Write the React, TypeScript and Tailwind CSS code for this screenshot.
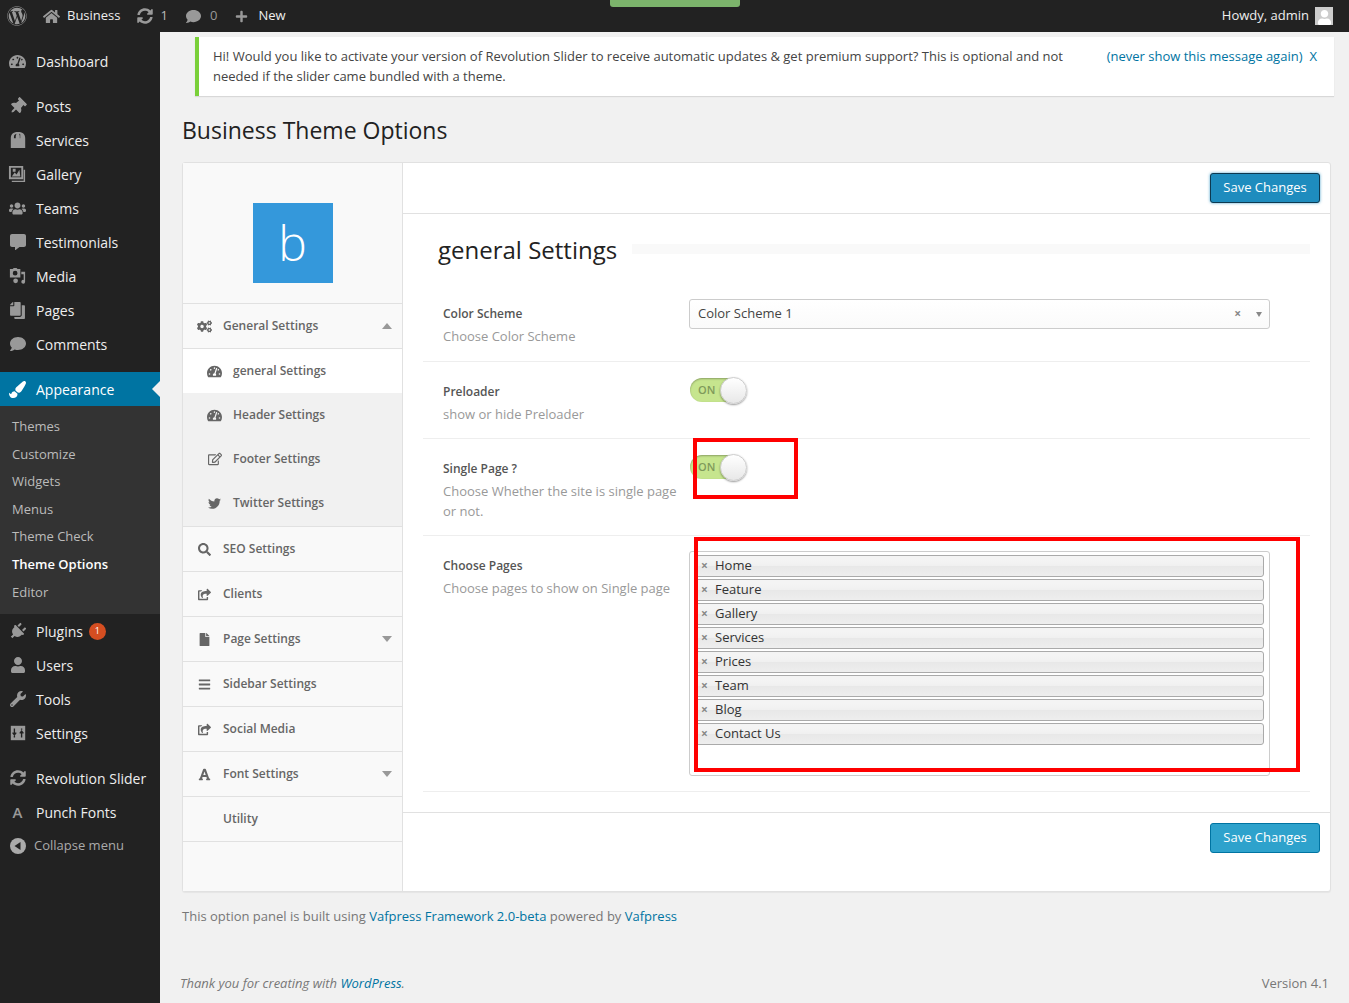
import type { ReactNode } from 'react'
import {
  FaBars,
  FaCogs,
  FaComment,
  FaCommentAlt,
  FaCopy,
  FaFile,
  FaFont,
  FaHome,
  FaPaintBrush,
  FaPlug,
  FaPlus,
  FaRegEdit,
  FaSearch,
  FaShareSquare,
  FaSyncAlt,
  FaTachometerAlt,
  FaThumbtack,
  FaTwitter,
  FaUser,
  FaUsers,
  FaWordpress,
  FaWrench,
} from 'react-icons/fa'

const font = "font-['Open_Sans',_sans-serif]"

function BagIcon() {
  return (
    <svg viewBox="0 0 20 20" className="h-[18px] w-[18px] fill-current">
      <path d="M2 8c0-4 2-7 8-7s8 3 8 7v11H2V8zm3.5 0h2V6c0-1 .3-2 1-3-2 .5-3 1.500-3 3v2zm5 0h2V3.500C11.800 3.200 11 3 11 3c.8 1 1 2 1 3v2h-1.500z" />
    </svg>
  )
}

function GalleryIcon() {
  return (
    <svg viewBox="0 0 20 20" className="h-[19px] w-[19px] fill-current">
      <path d="M1 1h15v14H1V1zm2 2v10h11V3H3zm15 2v13H4v-1.500h12.500V5H18z" />
      <path d="M4 12l3-4 2 2 3-5 1 7H4zM5 4h3v3H5z" />
    </svg>
  )
}

function MediaIcon() {
  return (
    <svg viewBox="0 0 20 20" className="h-[19px] w-[19px] fill-current">
      <path d="M2 2h3l1-1h3l1 1h3v9H2V2zm5.500 2a2.500 2.500 0 100 5 2.500 2.500 0 000-5z" />
      <path d="M14 5h4v10.500a2 2 0 11-1.500-1.900V7.500h-2.500V5zM8 12a2.500 2.500 0 110 5 2.500 2.500 0 010-5z" />
    </svg>
  )
}

function SettingsIcon() {
  return (
    <svg viewBox="0 0 20 20" className="h-[18px] w-[18px]">
      <path d="M2 2h16v16H2z" fill="currentColor" />
      <path d="M6 5v6M4 9.500l2 2.500 2-2.500M6 13v2M14 15V9M12 10.500L14 8l2 2.500M14 5v1.500" stroke="#222" strokeWidth="1.500" fill="none" />
    </svg>
  )
}

function CollapseIcon() {
  return (
    <svg viewBox="0 0 16 16" className="h-4 w-4">
      <circle cx="8" cy="8" r="8" fill="currentColor" />
      <path d="M10.500 4v8L4.500 8z" fill="#222" />
    </svg>
  )
}

function GaugeIcon() {
  return <FaTachometerAlt className="h-[15px] w-[15px]" />
}

type MenuEntry = { label: string; icon: ReactNode; badge?: string }

const topMenu: MenuEntry[] = [{ label: 'Dashboard', icon: <FaTachometerAlt className="h-[17px] w-[17px]" /> }]

const contentMenu: MenuEntry[] = [
  { label: 'Posts', icon: <FaThumbtack className="h-[17px] w-[17px] rotate-45" /> },
  { label: 'Services', icon: <BagIcon /> },
  { label: 'Gallery', icon: <GalleryIcon /> },
  { label: 'Teams', icon: <FaUsers className="h-[17px] w-[17px]" /> },
  { label: 'Testimonials', icon: <FaCommentAlt className="h-4 w-4" /> },
  { label: 'Media', icon: <MediaIcon /> },
  { label: 'Pages', icon: <FaCopy className="h-[17px] w-[17px] -scale-x-100" /> },
  { label: 'Comments', icon: <FaComment className="h-4 w-4" /> },
]

const adminMenu: MenuEntry[] = [
  { label: 'Plugins', icon: <FaPlug className="h-[17px] w-[17px] rotate-45" />, badge: '1' },
  { label: 'Users', icon: <FaUser className="h-4 w-4" /> },
  { label: 'Tools', icon: <FaWrench className="h-4 w-4" /> },
  { label: 'Settings', icon: <SettingsIcon /> },
]

const pluginMenu: MenuEntry[] = [
  { label: 'Revolution Slider', icon: <FaSyncAlt className="h-4 w-4" /> },
  { label: 'Punch Fonts', icon: <span className="text-[15px] font-semibold leading-none">A</span> },
]

const subMenu = ['Themes', 'Customize', 'Widgets', 'Menus', 'Theme Check', 'Theme Options', 'Editor']

const pages = ['Home', 'Feature', 'Gallery', 'Services', 'Prices', 'Team', 'Blog', 'Contact Us']

function MenuItem({ item }: { item: MenuEntry }) {
  return (
    <div className="flex h-[34px] items-center text-[14px] text-[#eee]">
      <span className="flex w-9 shrink-0 justify-center pr-[1px] text-[#999]">{item.icon}</span>
      <span>{item.label}</span>
      {item.badge ? (
        <span className="ml-[6px] flex h-[17px] w-[17px] items-center justify-center rounded-full bg-[#d54e21] text-[9px] text-white">
          {item.badge}
        </span>
      ) : null}
    </div>
  )
}

function AdminBar() {
  return (
    <header className="flex h-8 items-center bg-[#222] text-[13px] text-[#eee]">
      <FaWordpress className="ml-[7px] h-[20px] w-[20px] text-[#999]" />
      <FaHome className="ml-4 h-[17px] w-[17px] text-[#999]" />
      <span className="ml-[7px]">Business</span>
      <FaSyncAlt className="ml-4 h-4 w-4 text-[#999]" />
      <span className="ml-2 text-[#bbb]">1</span>
      <FaComment className="ml-[18px] h-[15px] w-[15px] text-[#999]" />
      <span className="ml-[9px] text-[#999]">0</span>
      <FaPlus className="ml-[18px] h-[13px] w-[13px] text-[#999]" />
      <span className="ml-[10px]">New</span>
      <span className="ml-auto">Howdy, admin</span>
      <span className="ml-[6px] mr-[16px] flex h-[18px] w-[18px] items-end justify-center overflow-hidden bg-[#ccc]">
        <FaUser className="h-[15px] w-[15px] text-white" />
      </span>
    </header>
  )
}

function Sidebar() {
  return (
    <aside className="w-40 shrink-0 bg-[#222] pt-3">
      {topMenu.map((item) => (
        <MenuItem key={item.label} item={item} />
      ))}
      <div className="h-[11px]" />
      {contentMenu.map((item) => (
        <MenuItem key={item.label} item={item} />
      ))}
      <div className="h-[11px]" />
      <div className="relative flex h-[34px] items-center bg-[#0074a2] text-[14px] text-white">
        <span className="flex w-9 shrink-0 justify-center pr-[1px]">
          <FaPaintBrush className="h-[17px] w-[17px]" />
        </span>
        <span>Appearance</span>
        <span className="absolute right-0 top-[9px] h-0 w-0 border-y-[8px] border-r-[8px] border-y-transparent border-r-[#f1f1f1]" />
      </div>
      <div className="flex h-[208px] flex-col bg-[#333] pt-[7px] text-[13px] text-[#bbb]">
        {subMenu.map((label) => (
          <div
            key={label}
            className={`flex h-[27.6px] items-center pl-3 ${label === 'Theme Options' ? 'font-semibold text-white' : ''}`}
          >
            {label}
          </div>
        ))}
      </div>
      {adminMenu.map((item) => (
        <MenuItem key={item.label} item={item} />
      ))}
      <div className="h-[11px]" />
      {pluginMenu.map((item) => (
        <MenuItem key={item.label} item={item} />
      ))}
      <div className="flex h-[34px] items-center text-[13px] text-[#aaa]">
        <span className="ml-[10px] mr-2 text-[#aaa]">
          <CollapseIcon />
        </span>
        Collapse menu
      </div>
    </aside>
  )
}

type NavEntry = { label: string; icon?: ReactNode; caret?: 'up' | 'down' }

const navAfter: NavEntry[] = [
  { label: 'SEO Settings', icon: <FaSearch className="h-[13px] w-[13px]" /> },
  { label: 'Clients', icon: <FaShareSquare className="h-[13px] w-[13px]" /> },
  { label: 'Page Settings', icon: <FaFile className="h-[13px] w-[13px]" />, caret: 'down' },
  { label: 'Sidebar Settings', icon: <FaBars className="h-[13px] w-[13px]" /> },
  { label: 'Social Media', icon: <FaShareSquare className="h-[13px] w-[13px]" /> },
  { label: 'Font Settings', icon: <FaFont className="h-[13px] w-[13px]" />, caret: 'down' },
  { label: 'Utility' },
]

const navSub: NavEntry[] = [
  { label: 'Header Settings', icon: <GaugeIcon /> },
  { label: 'Footer Settings', icon: <FaRegEdit className="h-[14px] w-[14px]" /> },
  { label: 'Twitter Settings', icon: <FaTwitter className="h-[13px] w-[13px]" /> },
]

function NavRow({ item }: { item: NavEntry }) {
  return (
    <div className="flex h-[45px] items-center border-b border-[#e1e1e1] bg-[#f9f9f9] text-[12px] font-semibold text-[#666]">
      <span className="flex w-10 shrink-0 justify-center pl-[3px] text-[#666]">{item.icon}</span>
      <span>{item.label}</span>
      {item.caret === 'up' ? (
        <span className="ml-auto mr-[10px] h-0 w-0 border-x-[5px] border-b-[6px] border-x-transparent border-b-[#999]" />
      ) : null}
      {item.caret === 'down' ? (
        <span className="ml-auto mr-[10px] h-0 w-0 border-x-[5px] border-t-[6px] border-x-transparent border-t-[#999]" />
      ) : null}
    </div>
  )
}

function NavSubRow({ item, active }: { item: NavEntry; active?: boolean }) {
  return (
    <div className={`flex h-11 items-center text-[12px] font-semibold text-[#666] ${active ? 'bg-white' : ''}`}>
      <span className="flex w-[50px] shrink-0 justify-center pl-[13px]">{item.icon}</span>
      <span>{item.label}</span>
    </div>
  )
}

function OptionNav() {
  return (
    <nav className="w-[220px] shrink-0 border-r border-[#e1e1e1] bg-[#f9f9f9]">
      <div className="flex h-[141px] justify-center border-b border-[#e1e1e1] pt-10">
        <div className="flex h-20 w-20 items-center justify-center bg-[#3498db] text-[48px] font-light leading-none text-white">
          b
        </div>
      </div>
      <NavRow item={{ label: 'General Settings', icon: <FaCogs className="h-[15px] w-[15px]" />, caret: 'up' }} />
      <div className="border-b border-[#e1e1e1] bg-[#f1f1f1] pb-[1px]">
        <NavSubRow item={{ label: 'general Settings', icon: <GaugeIcon /> }} active />
        {navSub.map((item) => (
          <NavSubRow key={item.label} item={item} />
        ))}
      </div>
      {navAfter.map((item) => (
        <NavRow key={item.label} item={item} />
      ))}
    </nav>
  )
}

function SaveButton({ focused }: { focused?: boolean }) {
  return (
    <button
      type="button"
      className={`h-[30px] w-[110px] rounded-[3px] border text-[13px] text-white ${
        focused
          ? 'border-[#0e3950] bg-[#1e8cbe] shadow-[0_0_3px_rgba(30,140,190,0.8)]'
          : 'border-[#0074a2] bg-[#2ea2cc]'
      }`}
    >
      Save Changes
    </button>
  )
}

function Toggle() {
  return (
    <div className="relative h-[25px] w-[59px]">
      <div className="ml-[1px] mt-[1px] flex h-[24px] w-[50px] items-center rounded-full bg-[#c6e58e] pl-[8px] text-[11px] font-semibold text-[#7f9a5a] shadow-[inset_0_1px_2px_rgba(0,0,0,0.3)]">
        ON
      </div>
      <div className="absolute left-[31px] top-0 h-[27px] w-[27px] rounded-full border border-[#ccc] bg-gradient-to-b from-white to-[#e8e8e8] shadow-[0_1px_2px_rgba(0,0,0,0.4)]" />
    </div>
  )
}

function FieldText({ title, children }: { title: string; children: ReactNode }) {
  return (
    <div className="w-[266px] shrink-0 pl-5">
      <div className="text-[12px] font-semibold leading-[20px] text-[#555]">{title}</div>
      <div className="mt-[2px] text-[13px] leading-[20px] text-[#999]">{children}</div>
    </div>
  )
}

function Annotation({ className }: { className: string }) {
  return <div className={`pointer-events-none absolute border-4 border-[#ff0000] ${className}`} />
}

function OptionBody() {
  return (
    <div className="flex min-w-0 flex-1 flex-col">
      <div className="flex h-[51px] items-center justify-end border-b border-[#e1e1e1] pr-[10px]">
        <SaveButton focused />
      </div>
      <div className="px-5 pt-[20px]">
        <div className="flex h-[32px] items-center pl-[15px]">
          <h2 className="text-[24px] leading-[32px] text-[#222]">general Settings</h2>
          <div className="ml-[15px] h-[10px] flex-1 -translate-y-[1px] bg-[#f9f9f9]" />
        </div>

        <div className="mt-[18px] flex h-[78px] border-b border-[#eee] pt-[15px]">
          <div className="pt-[5px]">
            <FieldText title="Color Scheme">Choose Color Scheme</FieldText>
          </div>
          <div className="flex h-[30px] w-[581px] items-center rounded-[3px] border border-[#ccc] bg-gradient-to-b from-white to-[#fafafa] pl-2 text-[13px] text-[#444]">
            Color Scheme 1
            <span className="ml-auto text-[12px] font-bold leading-none text-[#888]">×</span>
            <span className="ml-[15px] mr-[7px] h-0 w-0 border-x-[3.500px] border-t-[5px] border-x-transparent border-t-[#888]" />
          </div>
        </div>

        <div className="flex h-[77px] border-b border-[#eee] pt-[15px]">
          <div className="pt-[5px]">
            <FieldText title="Preloader">show or hide Preloader</FieldText>
          </div>
          <Toggle />
        </div>

        <div className="relative flex h-[97px] border-b border-[#eee] pt-[15px]">
          <div className="pt-[5px]">
            <FieldText title="Single Page ?">Choose Whether the site is single page or not.</FieldText>
          </div>
          <Toggle />
          <Annotation className="left-[270px] top-[-1px] h-[61px] w-[105px]" />
        </div>

        <div className="relative flex h-[256px] border-b border-[#eee] pt-[15px]">
          <div className="pt-[5px]">
            <FieldText title="Choose Pages">Choose pages to show on Single page</FieldText>
          </div>
          <div className="flex h-[225px] w-[581px] flex-col gap-[2px] rounded-[3px] border border-[#ccc] px-[5px] pt-[3px]">
            {pages.map((page) => (
              <div
                key={page}
                className="flex h-[22px] shrink-0 items-center rounded-[3px] border border-[#aaa] bg-[linear-gradient(to_bottom,#f4f4f4_20%,#f0f0f0_50%,#e8e8e8_52%,#eee_100%)] pl-[4px] text-[13px] text-[#333]"
              >
                <span className="mr-[6px] w-[9px] text-center text-[12px] font-bold leading-none text-[#888]">×</span>
                {page}
              </div>
            ))}
          </div>
          <Annotation className="left-[271px] top-[1px] h-[235px] w-[606px]" />
        </div>
      </div>
      <div className="mt-5 flex h-[79px] justify-end border-t border-[#e1e1e1] pr-[10px] pt-[10px]">
        <SaveButton />
      </div>
    </div>
  )
}

export default function App() {
  return (
    <div className={`relative flex h-[1003px] w-[1349px] flex-col overflow-hidden bg-[#f1f1f1] ${font}`}>
      <AdminBar />
      <div className="absolute left-[610px] top-0 h-[7px] w-[130px] rounded-b-[3px] bg-[#7cb46c]" />
      <div className="flex flex-1">
        <Sidebar />
        <main className="relative min-w-0 flex-1 pl-[22px] pr-[18px] pt-[5px]">
          <div className="-mr-[3px] ml-[13px] flex h-[59px] border-l-4 border-[#7ad03a] bg-white pl-[14px] pr-[17px] pt-[9px] text-[13px] leading-[20px] text-[#444] shadow-[0_1px_1px_rgba(0,0,0,0.1)]">
            <p className="w-[880px]">
              Hi! Would you like to activate your version of Revolution Slider to receive automatic updates &amp; get
              premium support? This is optional and not needed if the slider came bundled with a theme.
            </p>
            <span className="ml-auto text-[#0074a2]">(never show this message again)</span>
            <span className="ml-[7px] text-[#0074a2]">X</span>
          </div>
          <h1 className="mt-[17px] h-[49px] text-[23px] leading-[34px] text-[#222]">Business Theme Options</h1>
          <div className="flex h-[730px] rounded-[3px] border border-[#e1e1e1] bg-white shadow-[0_1px_1px_rgba(0,0,0,0.05)]">
            <OptionNav />
            <OptionBody />
          </div>
          <p className="mt-[14px] text-[13px] leading-[20px] text-[#777]">
            This option panel is built using <span className="text-[#0074a2]">Vafpress Framework 2.0-beta</span> powered
            by <span className="text-[#0074a2]">Vafpress</span>
          </p>
          <div className="absolute bottom-[10px] left-5 right-5 flex items-center justify-between text-[13px] leading-[20px] text-[#777]">
            <span className="italic">
              Thank you for creating with <span className="text-[#0074a2]">WordPress</span>.
            </span>
            <span>Version 4.1</span>
          </div>
        </main>
      </div>
    </div>
  )
}
